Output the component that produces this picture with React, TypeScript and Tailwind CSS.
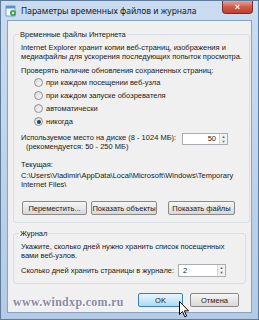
import React from 'react';

const Radio = ({ checked = false, label }: { checked?: boolean; label: string }) => (
  <div className="flex items-center h-[13px] pl-[13px]">
    <span className="w-[9px] h-[9px] rounded-full border border-[#8f8f8f] bg-gradient-to-br from-[#d9d9d9] to-[#fbfbfb] flex items-center justify-center">
      {checked && <span className="w-[4px] h-[4px] rounded-full bg-[#24405a]" />}
    </span>
    <span className="ml-[3px]">{label}</span>
  </div>
);

const Arrows = () => (
  <span className="w-[8px] flex flex-col border-l border-[#d6d6d6] bg-[#f1f1f1]">
    <span className="flex-1 flex items-center justify-center text-[4px] leading-none text-[#666]">▲</span>
    <span className="flex-1 flex items-center justify-center text-[4px] leading-none text-[#666]">▼</span>
  </span>
);

const Btn = ({ children, w, primary = false, className = '' }: { children: React.ReactNode; w: string; primary?: boolean; className?: string }) => (
  <div
    className={`${w} h-[14px] rounded-[2px] border flex items-center justify-center whitespace-nowrap ${
      primary
        ? 'border-[#3c7fb1] bg-gradient-to-b from-[#eaf6fd] to-[#a9dbf6]'
        : 'border-[#8a8a8a] bg-gradient-to-b from-[#f6f6f6] to-[#d8d8d8]'
    } ${className}`}
  >
    {children}
  </div>
);

const App = () => {
  return (
    <div className="relative w-[259px] h-[320px] overflow-hidden border border-[#5f7c9c] bg-gradient-to-b from-[#cadcf0] to-[#b3cbe5] flex flex-col font-['Liberation_Sans',Arial,sans-serif] text-[7.5px] leading-[9px] text-[#1a1a1a]">
      {/* title bar */}
      <div className="h-[19px] flex items-center pl-[4px] shrink-0">
        <svg width="12" height="12" viewBox="0 0 12 12">
          <rect x="1" y="1" width="9" height="10" fill="#f4f8fc" stroke="#6d8aa8" strokeWidth="0.8" />
          <rect x="1" y="1" width="9" height="2.5" fill="#5b8fc7" />
          <circle cx="8" cy="8" r="3" fill="#3fa34d" />
          <circle cx="8" cy="8" r="1.2" fill="#d8f0d8" />
        </svg>
        <span className="ml-[4px] font-['Noto_Sans',sans-serif] text-[8.5px] text-[#16202c]">Параметры временных файлов и журнала</span>
        <div className="ml-auto self-start mr-[5px] w-[31px] h-[13px] rounded-b-[4px] border border-t-0 border-[#7b2f28] bg-gradient-to-b from-[#e8a596] via-[#d05a48] to-[#c23d2c] flex items-center justify-center">
          <span className="text-white text-[9px] font-bold leading-none">×</span>
        </div>
      </div>

      {/* client area */}
      <div className="flex-1 mx-[6px] mb-[6px] border border-[#8aa2bd] bg-[#f0f0f0] flex flex-col px-[5px] pt-[9px]">
        <fieldset className="border border-[#d5dfe5] rounded-[3px] px-[7px] pb-[7px]">
          <legend className="px-[1px] ml-[-2px]">Временные файлы Интернета</legend>
          <p className="mt-[4px] whitespace-nowrap">
            Internet Explorer хранит копии веб-страниц, изображения и
            <br />
            медиафайлы для ускорения последующих попыток просмотра.
          </p>
          <p className="mt-[5px]">Проверять наличие обновления сохраненных страниц:</p>
          <div className="mt-[1px] flex flex-col">
            <Radio label="при каждом посещении веб-узла" />
            <Radio label="при каждом запуске обозревателя" />
            <Radio label="автоматически" />
            <Radio label="никогда" checked />
          </div>
          <div className="mt-[5px] flex items-start">
            <div className="flex-1">
              <p>Используемое место на диске (8 - 1024 МБ):</p>
              <p className="pl-[5px]">(рекомендуется: 50 - 250 МБ)</p>
            </div>
            <div className="flex w-[46px] h-[12px] mr-[14px] border border-[#abadb3] bg-white">
              <span className="flex-1 text-right pr-[3px] leading-[10px]">50</span>
              <Arrows />
            </div>
          </div>
          <p className="mt-[9px]">Текущая:</p>
          <p className="mt-[2px]">C:\Users\Vladimir\AppData\Local\Microsoft\Windows\Temporary Internet Files\</p>
          <div className="mt-[12px] flex pl-[1px]">
            <Btn w="w-[65px]">Переместить...</Btn>
            <Btn w="w-[66px]" className="ml-[4px]">Показать объекты</Btn>
            <Btn w="w-[67px]" className="ml-[11px]">Показать файлы</Btn>
          </div>
        </fieldset>

        <fieldset className="mt-[6px] border border-[#d5dfe5] rounded-[3px] px-[7px] pb-[6px]">
          <legend className="px-[1px] ml-[-2px]">Журнал</legend>
          <p className="mt-[4px] whitespace-nowrap">
            Укажите, сколько дней нужно хранить список посещенных
            <br />
            вами веб-узлов.
          </p>
          <div className="mt-[4px] flex items-center">
            <span className="flex-1">Сколько дней хранить страницы в журнале:</span>
            <div className="flex w-[48px] h-[13px] mr-[12px] border border-[#abadb3] bg-white">
              <span className="flex-1 pl-[4px] leading-[11px]">2</span>
              <Arrows />
            </div>
          </div>
        </fieldset>

        <div className="mt-[9px] flex justify-end pr-[7px]">
          <Btn w="w-[45px]" primary>OK</Btn>
          <Btn w="w-[49px]" className="ml-[7px]">Отмена</Btn>
        </div>
      </div>

      {/* watermark */}
      <span className="absolute left-[12px] top-[295px] font-['Liberation_Serif',serif] font-bold text-[12px] leading-none tracking-[0.3px] text-[#8c8aa2] [text-shadow:1px_1px_0_#ffffff]">
        www.windxp.com.ru
      </span>

      {/* cursor */}
      <svg className="absolute left-[178px] top-[300px]" width="11" height="17" viewBox="0 0 11 17">
        <path d="M0.5 0.5 L0.5 13.5 L3.5 10.5 L5.8 15.8 L7.6 15 L5.4 9.8 L9.5 9.8 Z" fill="#ffffff" stroke="#000000" strokeWidth="1" strokeLinejoin="round" />
      </svg>
    </div>
  );
};

export default App;
